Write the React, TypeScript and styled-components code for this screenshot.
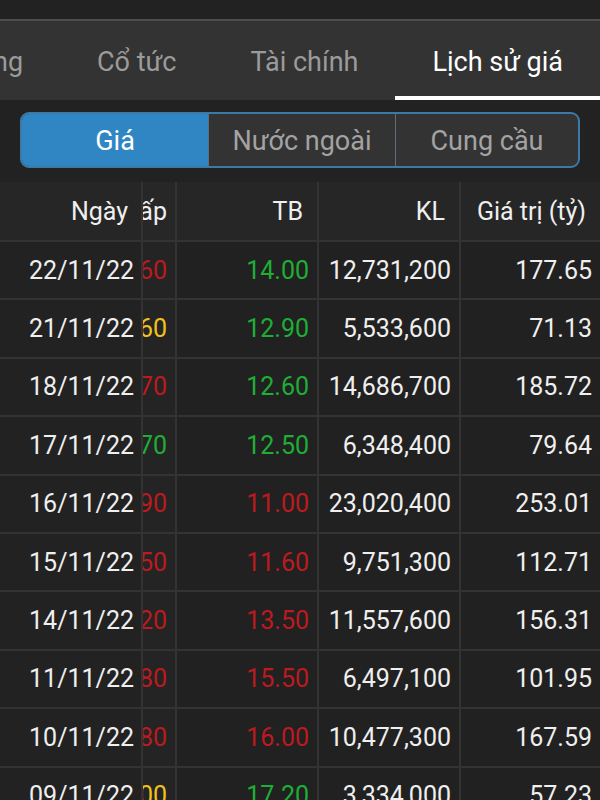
import React from 'react';
import styled, { createGlobalStyle, css } from 'styled-components';

const GlobalStyle = createGlobalStyle`
  html, body {
    margin: 0;
    padding: 0;
    background: #212121;
  }
  body {
    font-family: Roboto, 'Noto Sans', sans-serif;
    -webkit-font-smoothing: antialiased;
  }
`;

const Screen = styled.div`
  width: 600px;
  height: 800px;
  overflow: hidden;
  background: #212121;
  color: #ececec;
`;

const StatusBar = styled.div`
  height: 19px;
  background: #222222;
  border-bottom: 2px solid #4d4d4d;
`;

const TabBar = styled.div`
  height: 79px;
  background: #333333;
  display: flex;
  justify-content: flex-end;
  overflow: hidden;
`;

const Tab = styled.div<{ $active?: boolean }>`
  flex: 0 0 auto;
  padding: 7px 37px 0;
  display: flex;
  align-items: center;
  font-size: 27px;
  white-space: nowrap;
  color: #9b9b9b;
  box-sizing: border-box;
  border-bottom: 4px solid transparent;
  ${({ $active }) =>
    $active &&
    css`
      color: #ffffff;
      border-bottom-color: #ffffff;
    `}
`;

const SegmentArea = styled.div`
  padding: 12px 20px 14px;
  background: #222222;
`;

const Segmented = styled.div`
  display: grid;
  grid-template-columns: 186px 187px 1fr;
  height: 56px;
  border: 2px solid #3b7aa6;
  border-radius: 9px;
  overflow: hidden;
  box-sizing: border-box;
  background: #333333;
`;

const Segment = styled.div<{ $active?: boolean }>`
  display: flex;
  align-items: center;
  justify-content: center;
  font-size: 27px;
  padding-top: 2px;
  color: #a3a3a3;
  & + & {
    border-left: 1px solid #5f6e7a;
  }
  ${({ $active }) =>
    $active &&
    css`
      background: #2f86c3;
      color: #ffffff;
    `}
`;

const Table = styled.div`
  display: flex;
  flex-direction: column;
`;

const Row = styled.div<{ $header?: boolean }>`
  display: grid;
  grid-template-columns: 141px 34px 142px 142px 141px;
  height: ${({ $header }) => ($header ? '60px' : '58.4px')};
  box-sizing: border-box;
  border-bottom: 2px solid #333333;
  background: ${({ $header }) => ($header ? '#262626' : '#212121')};
`;

const Cell = styled.div<{ $header?: boolean; $color?: string }>`
  display: flex;
  align-items: center;
  justify-content: flex-end;
  overflow: hidden;
  white-space: nowrap;
  font-size: 25px;
  color: ${({ $color }) => $color || '#efefef'};
  padding-right: ${({ $header }) => ($header ? '14px' : '8px')};
  box-sizing: border-box;
  & + & {
    border-left: 2px solid #333333;
  }
`;

const DateCell = styled(Cell)`
  background: ${({ $header }) => ($header ? '#262626' : '#222222')};
  padding-right: ${({ $header }) => ($header ? '13px' : '7px')};
`;

const ClipCell = styled(Cell)`
  padding-right: 8px;
  background: ${({ $header }) => ($header ? '#272727' : '#242424')};
`;

const G = '#1fae35';
const R = '#bd1a1f';
const Y = '#efc21d';
const W = '#efefef';

type Item = {
  date: string;
  low: string;
  lowColor: string;
  tb: string;
  tbColor: string;
  kl: string;
  value: string;
};

const rows: Item[] = [
  { date: '22/11/22', low: '13.60', lowColor: R, tb: '14.00', tbColor: G, kl: '12,731,200', value: '177.65' },
  { date: '21/11/22', low: '12.60', lowColor: Y, tb: '12.90', tbColor: G, kl: '5,533,600', value: '71.13' },
  { date: '18/11/22', low: '11.70', lowColor: R, tb: '12.60', tbColor: G, kl: '14,686,700', value: '185.72' },
  { date: '17/11/22', low: '11.70', lowColor: G, tb: '12.50', tbColor: G, kl: '6,348,400', value: '79.64' },
  { date: '16/11/22', low: '10.90', lowColor: R, tb: '11.00', tbColor: R, kl: '23,020,400', value: '253.01' },
  { date: '15/11/22', low: '11.50', lowColor: R, tb: '11.60', tbColor: R, kl: '9,751,300', value: '112.71' },
  { date: '14/11/22', low: '13.20', lowColor: R, tb: '13.50', tbColor: R, kl: '11,557,600', value: '156.31' },
  { date: '11/11/22', low: '14.80', lowColor: R, tb: '15.50', tbColor: R, kl: '6,497,100', value: '101.95' },
  { date: '10/11/22', low: '15.80', lowColor: R, tb: '16.00', tbColor: R, kl: '10,477,300', value: '167.59' },
  { date: '09/11/22', low: '17.00', lowColor: Y, tb: '17.20', tbColor: G, kl: '3,334,000', value: '57.23' },
];

const App = () => {
  return (
    <Screen>
      <GlobalStyle />
      <StatusBar />
      <TabBar>
        <Tab>Cổ đông</Tab>
        <Tab>Cổ tức</Tab>
        <Tab>Tài chính</Tab>
        <Tab $active>Lịch sử giá</Tab>
      </TabBar>
      <SegmentArea>
        <Segmented>
          <Segment $active>Giá</Segment>
          <Segment>Nước ngoài</Segment>
          <Segment>Cung cầu</Segment>
        </Segmented>
      </SegmentArea>
      <Table>
        <Row $header>
          <DateCell $header>Ngày</DateCell>
          <ClipCell $header>Thấp</ClipCell>
          <Cell $header>TB</Cell>
          <Cell $header>KL</Cell>
          <Cell $header>Giá trị (tỷ)</Cell>
        </Row>
        {rows.map((r) => (
          <Row key={r.date}>
            <DateCell>{r.date}</DateCell>
            <ClipCell $color={r.lowColor}>{r.low}</ClipCell>
            <Cell $color={r.tbColor}>{r.tb}</Cell>
            <Cell $color={W}>{r.kl}</Cell>
            <Cell $color={W}>{r.value}</Cell>
          </Row>
        ))}
      </Table>
    </Screen>
  );
};

export default App;
